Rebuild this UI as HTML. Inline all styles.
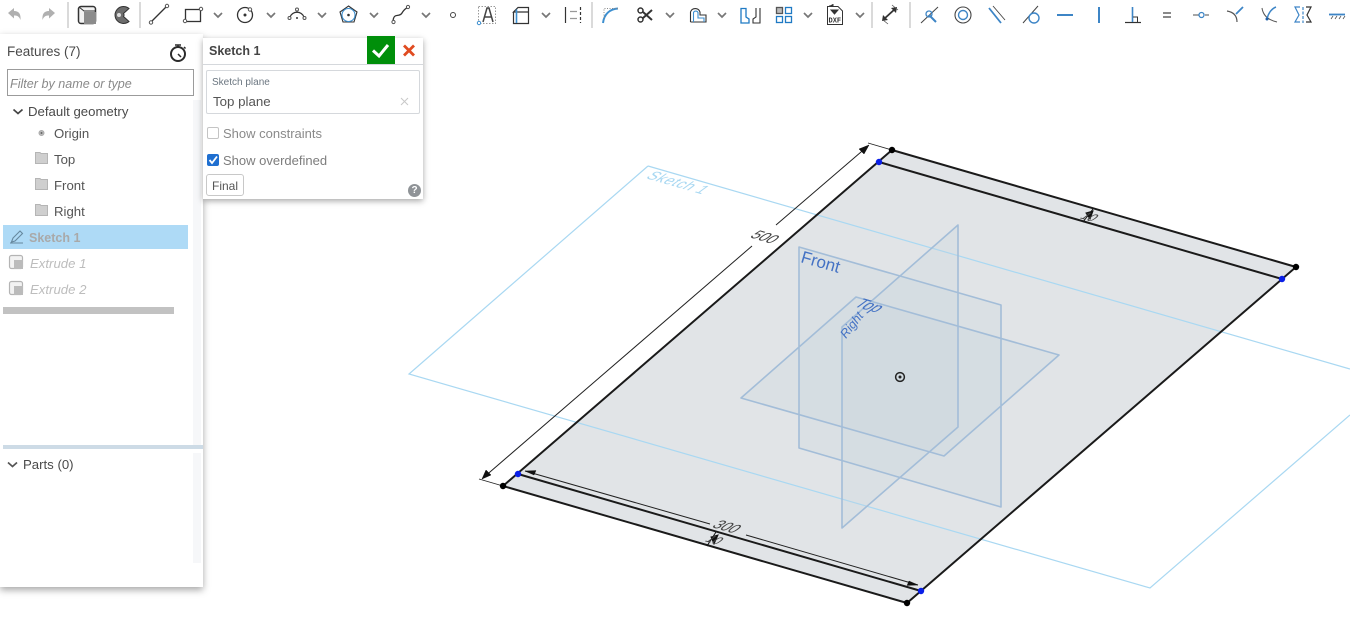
<!DOCTYPE html>
<html><head><meta charset="utf-8">
<style>
html,body{margin:0;padding:0;width:1350px;height:638px;overflow:hidden;background:#fff;font-family:"Liberation Sans",sans-serif;color:#444}
.t{position:absolute;white-space:nowrap;font-size:13.2px;line-height:16px;color:#4a4a4a}
.b{position:absolute}
#panel{position:absolute;left:0;top:34px;width:203px;height:553px;background:#fff;box-shadow:0 3px 7px rgba(0,0,0,.35)}
#dlg{position:absolute;left:203px;top:38px;width:220px;height:161px;background:#fff;box-shadow:0 2px 6px rgba(0,0,0,.35)}
svg{position:absolute;left:0;top:0}
</style></head><body>

<svg width="1350" height="638" viewBox="0 0 1350 638" fill="none">
<!-- sheet -->
<path d="M892 150L1296 267L907 603L503 486Z" fill="#e1e4e7"/>
<!-- sketch plane -->
<path d="M648 166L1350 369M648 166L409 374L1150 588L1350 415" stroke="#a9d8f2" stroke-width="1.200"/>
<!-- planes -->
<path d="M799 247L1001 305V507L799 448Z" fill="#c5d0dc" fill-opacity=".22"/>
<path d="M856 297L1059 355L944 456L741 398Z" fill="#c5d0dc" fill-opacity=".22"/>
<path d="M958 225V427L842 528V327Z" fill="#c5d0dc" fill-opacity=".22"/>
<path d="M799 247L1001 305V507L799 448Z M856 297L1059 355L944 456L741 398Z M958 225V427L842 528V327Z" stroke="#a3bdd8" stroke-width="1.600" stroke-linejoin="round"/>
<text transform="translate(800 262) rotate(16)" font-family="Liberation Sans" font-size="17" fill="#4472c4">Front</text>
<text transform="translate(853 306) rotate(16) skewX(-38)" font-family="Liberation Sans" font-size="15" fill="#4472c4">Top</text>
<text transform="translate(846 339) rotate(-52)" font-family="Liberation Sans" font-size="12.500" fill="#4472c4" font-style="italic">Right</text>
<text transform="translate(645 178) rotate(16) skewX(-38)" font-family="Liberation Sans" font-size="14" letter-spacing=".6" fill="#a9d8f2">Sketch 1</text>
<!-- origin -->
<circle cx="900" cy="377" r="4.400" stroke="#222" stroke-width="1.500"/><circle cx="900" cy="377" r="1.500" fill="#222"/>
<!-- sheet edges -->
<path d="M892 150L1296 267L907 603L503 486Z" stroke="#1a1a1a" stroke-width="2"/>
<path d="M879 162L1282 279M518 474L921 591" stroke="#1a1a1a" stroke-width="2"/>
<!-- dims -->
<path d="M479 479L503 486M868 143L892 150" stroke="#222" stroke-width=".9"/>
<path d="M483 478L752 246M776 225L868 146" stroke="#222" stroke-width="1"/>
<path d="M482 479L486 470L491 475ZM869 145L864 154L859 149Z" fill="#111" stroke="#111" stroke-width=".5"/>
<text transform="translate(749 237) rotate(17) skewX(-38)" font-family="Liberation Sans" font-size="14" fill="#444">500</text>
<path d="M525 471L710 524M746 535L918 585" stroke="#222" stroke-width="1"/>
<path d="M525 471L536 470.500L534 475ZM918 585L907 585.500L909 581Z" fill="#111" stroke="#111" stroke-width=".4"/>
<text transform="translate(711 527) rotate(16) skewX(-38)" font-family="Liberation Sans" font-size="14" fill="#444">300</text>
<path d="M707 546L716 532M711 537L718 535L714 544Z" stroke="#111" fill="#111"/>
<text transform="translate(704 541) rotate(16) skewX(-38)" font-family="Liberation Sans" font-size="12" fill="#444">10</text>
<path d="M1083 222L1093 209M1086 213L1093 211L1090 219Z" stroke="#111" fill="#111"/>
<text transform="translate(1079 218) rotate(16) skewX(-38)" font-family="Liberation Sans" font-size="12" fill="#444">10</text>
<!-- points -->
<g fill="#000"><circle cx="892" cy="150" r="3.200"/><circle cx="1296" cy="267" r="3.200"/><circle cx="907" cy="603" r="3.200"/><circle cx="503" cy="486" r="3.200"/></g>
<g fill="#0a1fe8"><circle cx="879" cy="162" r="3.200"/><circle cx="1282" cy="279" r="3.200"/><circle cx="921" cy="591" r="3.200"/><circle cx="518" cy="474" r="3.200"/></g>
</svg>

<!-- feature panel -->
<div id="panel"></div>
<div class="b" style="left:193px;top:100px;width:8px;height:346px;background:#f6f7f9"></div>
<div class="b" style="left:193px;top:453px;width:8px;height:110px;background:#f6f7f9"></div>
<div class="t" style="left:7px;top:44px;font-size:13.500px">Features (7)</div>
<div class="b" style="left:7px;top:69px;width:185px;height:25px;border:1px solid #9b9b9b"></div>
<div class="t" style="left:10px;top:76px;font-style:italic;color:#8a8a8a;font-size:12.600px">Filter by name or type</div>
<div class="t" style="left:28px;top:104px">Default geometry</div>
<div class="t" style="left:54px;top:126px;color:#555">Origin</div>
<div class="t" style="left:54px;top:152px;color:#555">Top</div>
<div class="t" style="left:54px;top:178px;color:#555">Front</div>
<div class="t" style="left:54px;top:204px;color:#555">Right</div>
<div class="b" style="left:3px;top:225px;width:185px;height:24px;background:#aedaf6"></div>
<div class="t" style="left:29px;top:230px;font-weight:bold;color:#a9a9a9;font-size:12.500px">Sketch 1</div>
<div class="t" style="left:30px;top:256px;font-style:italic;color:#bdbdbd">Extrude 1</div>
<div class="t" style="left:30px;top:282px;font-style:italic;color:#bdbdbd">Extrude 2</div>
<div class="b" style="left:3px;top:307px;width:171px;height:7px;background:#c2c2c2"></div>
<div class="b" style="left:3px;top:445px;width:200px;height:4px;background:#cddbe6"></div>
<div class="t" style="left:23px;top:457px">Parts (0)</div>

<!-- dialog -->
<div id="dlg"></div>
<div class="b" style="left:203px;top:64px;width:220px;height:1px;background:#d5d8dc"></div>
<div class="t" style="left:209px;top:43px;font-weight:bold;font-size:12.500px;color:#444">Sketch 1</div>
<div class="b" style="left:367px;top:36px;width:28px;height:28px;background:#008f0a"></div>
<div class="b" style="left:206px;top:70px;width:212px;height:42px;border:1px solid #d5d8dc;border-radius:2px"></div>
<div class="t" style="left:212px;top:75px;font-size:10px;color:#6b7680">Sketch plane</div>
<div class="t" style="left:213px;top:94px;color:#555;font-size:13.300px">Top plane</div>
<div class="b" style="left:207px;top:127px;width:10px;height:10px;border:1px solid #c4c4c4;border-radius:2px;background:#fff"></div>
<div class="t" style="left:223px;top:126px;color:#8a8a8a;font-size:13px">Show constraints</div>
<div class="b" style="left:207px;top:154px;width:12px;height:12px;border-radius:2px;background:#1f6fd0"></div>
<div class="t" style="left:223px;top:153px;color:#7d7d7d;font-size:13px">Show overdefined</div>
<div class="b" style="left:206px;top:174px;width:36px;height:20px;border:1px solid #c8c8c8;border-radius:3px"></div>
<div class="t" style="left:212px;top:178px;font-size:12px;color:#555">Final</div>
<div class="b" style="left:408px;top:184px;width:13px;height:13px;border-radius:50%;background:#8f9397;color:#fff;font-size:10px;font-weight:bold;line-height:13px;text-align:center">?</div>

<svg width="1350" height="638" viewBox="0 0 1350 638" fill="none">
<!-- dialog icons -->
<path d="M373 50.500L379 56L388 45" stroke="#fff" stroke-width="3"/>
<path d="M404 45.500L414 55.500M414 45.500L404 55.500" stroke="#e04b20" stroke-width="2.800"/>
<path d="M401 98L408 105M408 98L401 105" stroke="#c8c8c8" stroke-width="1"/>
<path d="M209.500 160L212 163L217 156.500" stroke="#fff" stroke-width="1.800"/>
<!-- panel icons -->
<circle cx="178" cy="54" r="7" stroke="#2b2b2b" stroke-width="2"/><path d="M175 45H181M178 45V47M178 54L181 57M184 47L185.500 48.500" stroke="#2b2b2b" stroke-width="1.500"/>
<path d="M13.500 109.500L18 113.500L22.500 109.500" stroke="#444" stroke-width="1.700"/>
<path d="M8 462.500L12.500 466.500L17 462.500" stroke="#555" stroke-width="1.700"/>
<circle cx="41.500" cy="133" r="2.500" fill="#bbb" stroke="#aaa"/><circle cx="41.500" cy="133" r="1" fill="#666"/>
<g fill="#cfcfcf" stroke="#b5b5b5"><path d="M35.500 152.500H40L41 153.500H47.500V163.500H35.500Z"/><path d="M35.500 178.500H40L41 179.500H47.500V189.500H35.500Z"/><path d="M35.500 204.500H40L41 205.500H47.500V215.500H35.500Z"/></g>
<path d="M10 243H23M11.500 242L13 238L20 231L22.500 233.500L15 241Z" stroke="#66889e" stroke-width="1.100"/>
<g stroke="#b4b4b4" stroke-width="1.200"><rect x="9.500" y="255.500" width="13" height="13" rx="2" fill="#f2f2f2"/><rect x="9.500" y="281.500" width="13" height="13" rx="2" fill="#f2f2f2"/></g>
<rect x="14" y="260" width="9" height="9" fill="#bbb"/><rect x="14" y="286" width="9" height="9" fill="#bbb"/>

<!-- toolbar separators -->
<g fill="#dadada"><rect x="67" y="2" width="2" height="26"/><rect x="139" y="2" width="2" height="26"/><rect x="591" y="2" width="2" height="26"/><rect x="871" y="2" width="2" height="26"/><rect x="909" y="2" width="2" height="26"/></g>
<!-- undo/redo -->
<path d="M8 13L14 8V11C19 11 21 14 20.500 20C19 16 17 15.500 14 15.500V18.500Z" fill="#b0b0b0"/>
<path d="M55 13L49 8V11C44 11 42 14 42.500 20C44 16 46 15.500 49 15.500V18.500Z" fill="#b0b0b0"/>
<!-- extrude -->
<rect x="78.500" y="6.500" width="17" height="17" rx="2.500" stroke="#333" stroke-width="1.500" fill="#f2f2f2"/>
<path d="M79 7L84 11H96" stroke="#333"/><rect x="84" y="12" width="12" height="12" fill="#8c8c8c"/>
<!-- revolve -->
<path d="M129 8.500A8.500 8.500 0 1 0 129 21.500L123.500 16.500A2.500 2.500 0 0 0 123.500 13.500Z" fill="#6d6d6d" stroke="#333"/><circle cx="119" cy="15" r="2" fill="#ddd"/>
<!-- line -->
<path d="M152 21L166 7" stroke="#333" stroke-width="1.300"/><circle cx="151" cy="22.500" r="1.700" fill="#fff" stroke="#555"/><circle cx="167" cy="6" r="1.700" fill="#fff" stroke="#555"/>
<!-- rect -->
<rect x="185.500" y="9.500" width="15" height="12" stroke="#333" stroke-width="1.300"/><circle cx="185" cy="21" r="1.700" fill="#fff" stroke="#555"/><circle cx="201" cy="9" r="1.700" fill="#fff" stroke="#555"/>
<!-- circle -->
<circle cx="245" cy="15" r="7.500" stroke="#333" stroke-width="1.300"/><circle cx="245" cy="15" r="1.500" fill="#333"/><circle cx="250" cy="9.500" r="1.700" fill="#fff" stroke="#555"/>
<!-- arc -->
<path d="M290 17A7.500 7.500 0 0 1 304 17" stroke="#333" stroke-width="1.300"/><circle cx="297" cy="9.500" r="1.500" fill="#fff" stroke="#555"/><circle cx="289.500" cy="18" r="1.500" fill="#fff" stroke="#555"/><circle cx="304.500" cy="18" r="1.500" fill="#fff" stroke="#555"/><circle cx="297" cy="18" r="1" fill="#333"/>
<!-- polygon -->
<path d="M348.500 6L357 12L354 22H343L340 12Z" stroke="#333" stroke-width="1.100"/><circle cx="348.500" cy="15" r="6.500" stroke="#3d8fd0" stroke-width="1.100"/><circle cx="348.500" cy="15" r="1.300" fill="#333"/>
<!-- spline -->
<path d="M393 21C394 12 399 18 402 13S406 9 408 7" stroke="#333" stroke-width="1.300"/><circle cx="393.500" cy="22" r="1.600" fill="#fff" stroke="#555"/><circle cx="408" cy="7" r="1.600" fill="#fff" stroke="#555"/>
<!-- point -->
<circle cx="453" cy="15" r="2.500" stroke="#444"/>
<!-- text -->
<rect x="478.500" y="6.500" width="17" height="17" stroke="#999" stroke-dasharray="1.500 1.500"/>
<path d="M483 22L487 8H489L493 22M484.500 17H491.500" stroke="#444" stroke-width="1.500"/><circle cx="479" cy="23" r="1.700" fill="#fff" stroke="#3d8fd0"/>
<!-- box -->
<path d="M513.500 12V23.500H528.500V12H513.500L518 7.500H528.500V12" stroke="#333" stroke-width="1.200"/><path d="M516.500 9.500V23" stroke="#3d8fd0" stroke-width="1.600"/>
<!-- mirror -->
<path d="M565.500 7V23" stroke="#333" stroke-width="1.200"/><path d="M580.500 7V23" stroke="#333" stroke-width="1.200" stroke-dasharray="3 2"/><path d="M570 11.500H577M570 18.500H577" stroke="#999" stroke-width="1.300"/>
<!-- fillet -->
<path d="M603 23C604 14 610 9 618 8.500" stroke="#3d8fd0" stroke-width="2"/><path d="M618 8.500H604V18" stroke="#888" stroke-dasharray="1 1.500"/>
<!-- scissors -->
<circle cx="640.500" cy="10.500" r="2.500" stroke="#333" stroke-width="1.500"/><circle cx="640.500" cy="19.500" r="2.500" stroke="#333" stroke-width="1.500"/><path d="M643 12L652 20M643 18L652 10" stroke="#333" stroke-width="2"/>
<!-- offset -->
<path d="M690.500 22V12A5 5 0 0 1 700 12V15H706V22H690.500" stroke="#333" stroke-width="1.100"/><path d="M693.500 22V12.500A2.500 2.500 0 0 1 698 12.500V18H704V22" stroke="#3d8fd0" stroke-width="1.100"/>
<!-- transform -->
<path d="M741 8.500H746V17L749 19V23H741Z" stroke="#1f7ac4" stroke-width="1.300"/><path d="M760 8V23H753V19L756 17V8" stroke="#333" stroke-width="1.100"/>
<!-- pattern -->
<g stroke="#1f7ac4" stroke-width="1.300"><rect x="776.500" y="7.500" width="6" height="6" stroke="#555" fill="#bbb"/><rect x="785.500" y="7.500" width="6" height="6"/><rect x="776.500" y="16.500" width="6" height="6"/><rect x="785.500" y="16.500" width="6" height="6"/></g>
<!-- dxf -->
<path d="M827.500 6.500H838L842.500 11V24.500H827.500Z" stroke="#333" fill="#fff"/><path d="M829 6H833V4M831 10H838L834.500 14Z" fill="#333" stroke="#333"/>
<text x="828.500" y="22.500" font-family="Liberation Mono" font-size="7" font-weight="bold" fill="#333">DXF</text>
<!-- use -->
<path d="M884 19L895 9" stroke="#333" stroke-width="1.800"/><path d="M882 21L883 15L888 20ZM897 7L896 13L891 8Z" fill="#333"/><path d="M883 20L888 24M892 5L898 10" stroke="#555" stroke-width=".8"/>
<!-- chevrons -->
<g stroke="#777" stroke-width="1.700"><path d="M214 13L218 17L222 13M267 13L271 17L275 13M318 13L322 17L326 13M370 13L374 17L378 13M422 13L426 17L430 13M542 13L546 17L550 13M666 13L670 17L674 13M718 13L722 17L726 13M804 13L808 17L812 13M856 13L860 17L864 13"/></g>
<!-- constraints -->
<path d="M921 23L938 7" stroke="#444"/><path d="M929 15L936 22" stroke="#3d85c6" stroke-width="2"/><circle cx="929" cy="14" r="3" stroke="#3d85c6" stroke-width="1.300"/>
<circle cx="963" cy="15" r="8" stroke="#444" stroke-width="1.100"/><circle cx="963" cy="15" r="4.500" stroke="#3d85c6" stroke-width="1.400"/>
<path d="M989 8L1001 23" stroke="#3d85c6" stroke-width="1.800"/><path d="M993 6L1005 20" stroke="#444" stroke-width=".9"/>
<path d="M1023 23L1038 6" stroke="#444"/><circle cx="1034" cy="18" r="5" stroke="#3d85c6" stroke-width="1.400"/>
<path d="M1057 15H1073" stroke="#3d85c6" stroke-width="2"/>
<path d="M1099 7V23" stroke="#3d85c6" stroke-width="2"/>
<path d="M1125 22.500H1141" stroke="#333" stroke-width="1.200"/><path d="M1132.500 7V22" stroke="#3d85c6" stroke-width="1.600"/><path d="M1133 17H1137.500V22" stroke="#333"/>
<path d="M1163 13H1171M1163 17H1171" stroke="#444" stroke-width="1.300"/>
<path d="M1193 15H1199M1205 15H1209" stroke="#888" stroke-width="1.500"/><circle cx="1201.500" cy="15" r="2.500" stroke="#3d85c6" stroke-width="1.300"/>
<path d="M1227 11C1233 12 1237 15 1237 22" stroke="#555" stroke-width="1.200"/><path d="M1236 14L1243 7" stroke="#3d85c6" stroke-width="1.800"/>
<path d="M1262 8C1263 15 1268 20 1277 22" stroke="#555"/><path d="M1267 19C1268 14 1271 9 1276 7" stroke="#3d85c6" stroke-width="1.500"/><circle cx="1267" cy="19" r="1.500" fill="#1f5fa8"/>
<path d="M1303 7V23" stroke="#3d85c6" stroke-dasharray="3 1.500" stroke-width="1.200"/><path d="M1300 7H1295L1299 15L1295 22H1300" stroke="#3d85c6" stroke-width="1.200"/><path d="M1306 7H1311L1307 15L1311 22H1306" stroke="#333" stroke-width="1.200"/>
<path d="M1329 14.500H1345" stroke="#3d85c6" stroke-width="1.800"/><path d="M1331 19L1333 16M1335 19L1337 16M1339 19L1341 16M1343 19L1345 16" stroke="#555" stroke-width=".8"/>
</svg>
</body></html>
